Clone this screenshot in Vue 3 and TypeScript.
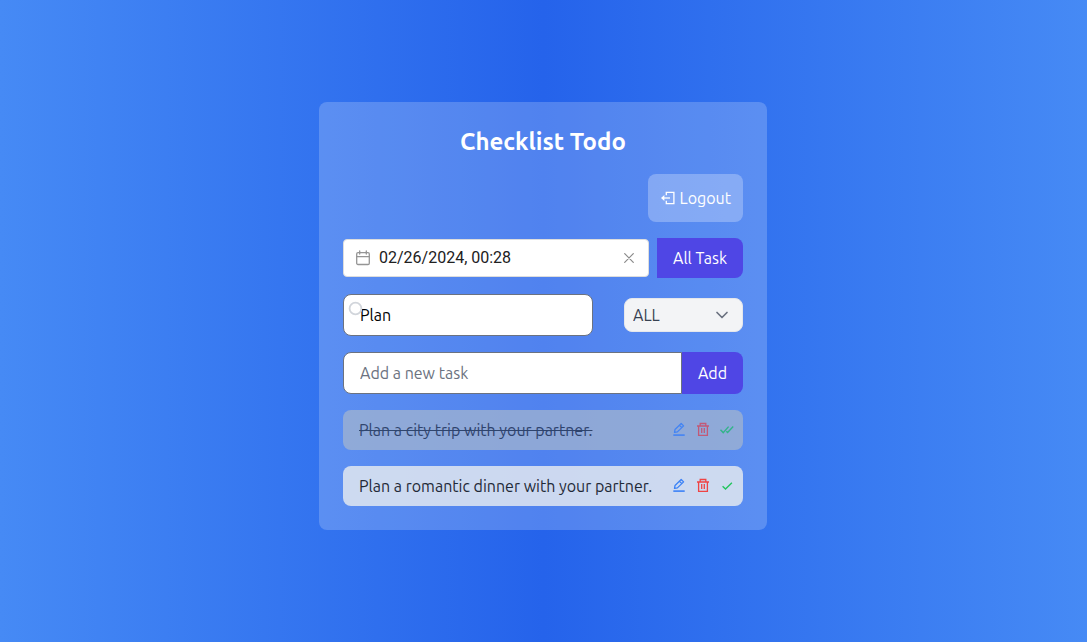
<script setup lang="ts">
import { ref } from 'vue'

interface Task {
  id: number
  title: string
  done: boolean
}

const date = ref('02/26/2024, 00:28')
const search = ref('Plan')
const filter = ref('ALL')
const newTask = ref('')
const tasks = ref<Task[]>([
  { id: 1, title: 'Plan a city trip with your partner.', done: true },
  { id: 2, title: 'Plan a romantic dinner with your partner.', done: false },
])

function addTask() {
  const title = newTask.value.trim()
  if (!title) return
  tasks.value.push({ id: Date.now(), title, done: false })
  newTask.value = ''
}

function removeTask(id: number) {
  tasks.value = tasks.value.filter((task) => task.id !== id)
}
</script>

<template>
  <main class="page">
    <section class="card">
      <h1 class="title">Checklist Todo</h1>

      <button type="button" class="logout">
        <svg class="icon" viewBox="0 0 16 16" fill="none" stroke="currentColor" stroke-width="1.3" aria-hidden="true">
          <path d="M6.3 5.2V2.4h7.6v11.2H6.3v-2.8" />
          <path d="M10 8H3.5" />
          <path d="M4.4 5 1 8l3.4 3z" fill="currentColor" stroke="none" />
        </svg>
        <span>Logout</span>
      </button>

      <div class="row date-row">
        <div class="date-box">
          <svg class="icon" viewBox="0 0 16 16" fill="none" stroke="#959595" stroke-width="1.3" stroke-linejoin="round" stroke-linecap="round" aria-hidden="true">
            <rect x="1.7" y="2.7" width="12.6" height="11.8" rx="1.3" />
            <path d="M1.7 6.7h12.6M4.7 1v3M11.3 1v3" />
          </svg>
          <input v-model="date" class="date-input" type="text" aria-label="Date" />
          <button type="button" class="plain clear" aria-label="Clear date" @click="date = ''">
            <svg class="icon" viewBox="0 0 16 16" stroke="#8a8a8a" stroke-width="1.2" stroke-linecap="round" aria-hidden="true">
              <path d="m3.7 3.7 8.6 8.6M12.3 3.7l-8.6 8.6" />
            </svg>
          </button>
        </div>
        <button type="button" class="primary">All Task</button>
      </div>

      <div class="row filter-row">
        <div class="search-box">
          <svg class="search-icon" viewBox="0 0 16 16" fill="none" stroke="#d1d5db" stroke-width="1.8" aria-hidden="true">
            <circle cx="7.5" cy="7.5" r="5.9" />
          </svg>
          <input v-model="search" class="field search" type="text" aria-label="Search tasks" />
        </div>
        <div class="select-box">
          <select v-model="filter" class="select" aria-label="Filter tasks">
            <option>ALL</option>
            <option>DONE</option>
            <option>UNDONE</option>
          </select>
          <svg class="chevron" viewBox="0 0 20 20" fill="none" stroke="#6b7280" stroke-width="1.7" stroke-linecap="round" stroke-linejoin="round" aria-hidden="true">
            <path d="m5 7.5 5 5 5-5" />
          </svg>
        </div>
      </div>

      <form class="row add-row" @submit.prevent="addTask">
        <input v-model="newTask" class="field new-task" type="text" placeholder="Add a new task" aria-label="New task" />
        <button type="submit" class="primary">Add</button>
      </form>

      <ul class="tasks">
        <li v-for="task in tasks" :key="task.id" class="task" :class="{ done: task.done }">
          <span class="task-title">{{ task.title }}</span>
          <span class="actions">
            <button type="button" class="plain edit" aria-label="Edit task">
              <svg class="icon" viewBox="0 0 16 16" fill="none" stroke="currentColor" stroke-width="1.3" stroke-linejoin="round" aria-hidden="true">
                <path d="m3.5 10.4.5-2.9 6.2-6 2.4 2.4-6.2 6zM8.4 3.2l2.4 2.4" />
                <path d="M2.3 13.1h11.4" stroke-width="1.6" />
              </svg>
            </button>
            <button type="button" class="plain delete" aria-label="Delete task" @click="removeTask(task.id)">
              <svg class="icon" viewBox="0 0 16 16" fill="none" stroke="currentColor" stroke-width="1.3" aria-hidden="true">
                <path d="M2 4h12M5.2 4V1.5h5.6V4M3.6 4v9.4h8.8V4M6.7 6v5M9.3 6v5" />
              </svg>
            </button>
            <button type="button" class="plain toggle" aria-label="Toggle task" @click="task.done = !task.done">
              <svg class="icon" viewBox="0 0 16 16" fill="none" stroke="currentColor" stroke-width="1.4" aria-hidden="true">
                <path v-if="task.done" d="m1.5 7.8 2.7 2.8 5.4-6M7.3 9.3l1.3 1.3 5.6-6" />
                <path v-else d="m3.6 8.2 2.9 2.8 6.4-6.2" />
              </svg>
            </button>
          </span>
        </li>
      </ul>
    </section>
  </main>
</template>

<style>
body {
  margin: 0;
}
</style>

<style scoped>
* {
  box-sizing: border-box;
}

.page {
  min-height: 100vh;
  display: flex;
  align-items: center;
  justify-content: center;
  padding: 0 17px 10px 16px;
  background: linear-gradient(to right, #468af5, #2563eb, #468af5);
  font-family: Ubuntu, "Noto Sans", sans-serif;
  font-size: 16px;
  line-height: 24px;
}

button,
input,
select {
  margin: 0;
  font: inherit;
}

button {
  cursor: pointer;
}

.card {
  width: 100%;
  max-width: 448px;
  display: flex;
  flex-direction: column;
  gap: 16px;
  padding: 24px;
  border-radius: 8px;
  background: rgba(255, 255, 255, 0.2);
}

.title {
  margin: 0;
  color: #fff;
  font-size: 24px;
  font-weight: 700;
  line-height: 32px;
  text-align: center;
}

.icon {
  display: block;
  flex: none;
  width: 16px;
  height: 16px;
}

.logout {
  align-self: flex-end;
  display: flex;
  align-items: center;
  gap: 4px;
  padding: 12px;
  border: 0;
  border-radius: 8px;
  background: rgba(255, 255, 255, 0.27);
  color: #fff;
}

.row {
  display: flex;
  align-items: center;
}

.date-row {
  gap: 8px;
}

.date-box {
  flex: 1;
  min-width: 0;
  display: flex;
  align-items: center;
  gap: 8px;
  height: 38px;
  padding: 0 11px;
  border: 1px solid #ddd;
  border-radius: 4px;
  background: #fff;
}

.date-input {
  flex: 1;
  min-width: 0;
  padding: 0;
  border: 0;
  outline: 0;
  background: none;
  color: #212121;
  font-family: Roboto, sans-serif;
  font-size: 16px;
}

.plain {
  padding: 0;
  border: 0;
  background: none;
}

.primary {
  flex: none;
  align-self: stretch;
  padding: 8px 16px;
  border: 0;
  border-radius: 0 8px 8px 0;
  background: #4f46e5;
  color: #fff;
}

.filter-row {
  justify-content: space-between;
  gap: 31px;
}

.search-box {
  position: relative;
  flex: 1;
  min-width: 0;
}

.search-icon {
  position: absolute;
  top: 7px;
  left: 5px;
  width: 16px;
  height: 16px;
}

.field {
  display: block;
  min-width: 0;
  height: 42px;
  padding: 8px 16px;
  border: 1px solid #6b7280;
  border-radius: 8px;
  outline: 0;
  background: #fff;
  color: #000;
}

.field::placeholder {
  color: #6b7280;
  opacity: 1;
}

.search {
  width: 100%;
}

.select-box {
  position: relative;
  flex: 0 0 119px;
}

.select {
  display: block;
  width: 100%;
  height: 34px;
  padding: 0 32px 0 8px;
  appearance: none;
  border: 1px solid #e5e7eb;
  border-radius: 8px;
  background: #f3f4f6;
  color: #374151;
}

.chevron {
  position: absolute;
  top: 7px;
  right: 11px;
  width: 20px;
  height: 20px;
  pointer-events: none;
}

.new-task {
  flex: 1;
  border-radius: 8px 0 0 8px;
}

.tasks {
  display: flex;
  flex-direction: column;
  gap: 16px;
  margin: 0;
  padding: 0;
  list-style: none;
}

.task {
  display: flex;
  align-items: center;
  justify-content: space-between;
  gap: 8px;
  padding: 8px 8px 8px 16px;
  border-radius: 8px;
  background: rgba(226, 232, 240, 0.85);
  color: #1f2937;
}

.task.done {
  background: rgb(167, 183, 206);
  opacity: 0.7;
}

.done .task-title {
  text-decoration: line-through;
}

.actions {
  display: flex;
  gap: 8px;
}

.edit {
  color: #3b82f6;
}

.delete {
  color: #ef4444;
}

.toggle {
  color: #22c55e;
}
</style>
